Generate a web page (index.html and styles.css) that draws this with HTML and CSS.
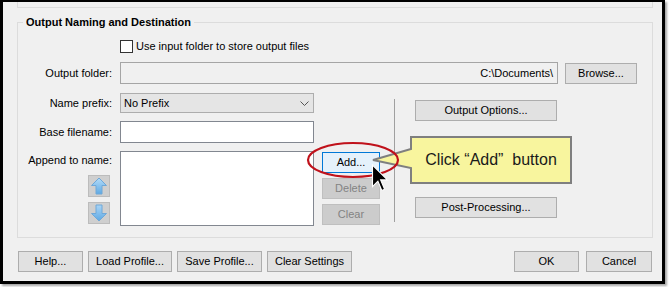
FILE: index.html
```html
<!DOCTYPE html>
<html>
<head>
<meta charset="utf-8">
<link rel="stylesheet" href="styles.css">
</head>
<body>
<div class="window">
  <div class="prev-group"></div>
  <fieldset class="group">
    <legend>Output Naming and Destination</legend>
    <div class="row-check"><span class="checkbox"></span><span>Use input folder to store output files</span></div>
    <div class="row-folder">
      <span class="label">Output folder:</span>
      <div class="field readonly">C:\Documents\</div>
      <button class="btn browse">Browse...</button>
    </div>
    <div class="row-lower">
      <div class="form-grid">
        <span class="label">Name prefix:</span>
        <div class="select"><span>No Prefix</span><svg class="chev" width="9" height="5" viewBox="0 0 9 5"><path d="M0.5 0.5 L4.5 4.5 L8.5 0.5" fill="none" stroke="#555" stroke-width="1"/></svg></div>
        <span class="label">Base filename:</span>
        <div class="field white base"></div>
        <div class="append-label">
          <span class="label">Append to name:</span>
          <div class="arrow-btns">
            <span class="arrow-btn"><svg width="20" height="20" viewBox="0 0 20 20"><defs><linearGradient id="gu" x1="0" y1="0" x2="0" y2="1"><stop offset="0" stop-color="#b3dcf9"/><stop offset="1" stop-color="#5fa9e3"/></linearGradient></defs><path d="M10 2 L17.5 9.5 L13 9.5 L13 18 L7 18 L7 9.5 L2.5 9.5 Z" fill="url(#gu)" stroke="#6fa8d8" stroke-width="1"/></svg></span>
            <span class="arrow-btn"><svg width="20" height="20" viewBox="0 0 20 20"><defs><linearGradient id="gd" x1="0" y1="0" x2="0" y2="1"><stop offset="0" stop-color="#a9d5f7"/><stop offset="1" stop-color="#5fa9e3"/></linearGradient></defs><path d="M7 2 L13 2 L13 10.5 L17.5 10.5 L10 18 L2.5 10.5 L7 10.5 Z" fill="url(#gd)" stroke="#6fa8d8" stroke-width="1"/></svg></span>
          </div>
        </div>
        <div class="field white list"></div>
      </div>
      <div class="list-btns">
        <button class="btn add">Add...</button>
        <button class="btn disabled">Delete</button>
        <button class="btn disabled">Clear</button>
      </div>
      <div class="separator"></div>
      <div class="side-btns">
        <button class="btn side">Output Options...</button>
        <button class="btn side">Post-Processing...</button>
      </div>
    </div>
  </fieldset>
  <div class="footer">
    <button class="btn help">Help...</button>
    <button class="btn load">Load Profile...</button>
    <button class="btn save">Save Profile...</button>
    <button class="btn clear-set">Clear Settings</button>
    <button class="btn ok">OK</button>
    <button class="btn cancel">Cancel</button>
  </div>
</div>
<div class="annotation">
  <svg class="annot-svg" width="670" height="287" viewBox="0 0 670 287">
    <path d="M411 137 H571 V183 H411 V168 L373 160 L411 149 Z" fill="#f8f59e" stroke="#7f7f7f" stroke-width="2" stroke-linejoin="miter"/>
    <ellipse cx="353" cy="160" rx="45" ry="17" fill="none" stroke="#c0121b" stroke-width="2.2"/>
    <path d="M372.5 165 L372.5 186.6 L377.9 181.2 L381.9 190.6 L384.6 189.3 L380.6 179.9 L387.4 179.9 Z" fill="#000" stroke="#fff" stroke-width="1.1" stroke-linejoin="miter"/>
  </svg>
  <div class="callout-text">Click “Add”&nbsp; button</div>
</div>
</body>
</html>
```
FILE: styles.css
```css
* { box-sizing: border-box; }

body {
  margin: 0;
  width: 670px;
  height: 287px;
  overflow: hidden;
  background: #ffffff;
  position: relative;
  font-family: "Liberation Sans", Arial, sans-serif;
  font-size: 11px;
  color: #000;
}

.window {
  width: 665px;
  height: 284px;
  border: 3px solid #000;
  border-top-width: 2px;
  background: #f0f0f0;
  box-shadow: 2px 2px 2px rgba(0, 0, 0, 0.35);
  display: flex;
  flex-direction: column;
}

.prev-group {
  margin: 0 9px 0 14px;
  height: 6px;
  border: 1px solid #dcdcdc;
  border-top: 0;
  flex: none;
}

.group {
  margin: 8px 9px 0 14px;
  padding: 0 0 11px 0;
  border: 1px solid #dcdcdc;
  min-width: 0;
  flex: none;
}

.group legend {
  margin-left: 5px;
  padding: 0 3px;
  font-weight: bold;
  font-size: 11px;
  line-height: 13px;
}

.row-check {
  margin-top: 11px;
  padding-left: 102px;
  display: flex;
  align-items: center;
  gap: 3px;
  height: 13px;
  line-height: 13px;
}

.checkbox {
  width: 13px;
  height: 13px;
  border: 1px solid #333;
  background: #fff;
  flex: none;
}

.label {
  text-align: right;
  white-space: nowrap;
}

.row-folder {
  margin-top: 9px;
  display: flex;
  align-items: center;
  height: 22px;
}

.row-folder .label {
  width: 94px;
  margin-right: 8px;
}

.field {
  height: 22px;
  border: 1px solid #828790;
  background: #fff;
}

.field.readonly {
  width: 438px;
  background: #f0f0f0;
  border-color: #a5a5a5;
  text-align: right;
  padding-right: 4px;
  line-height: 20px;
}

.btn {
  font-family: "Liberation Sans", Arial, sans-serif;
  font-size: 11px;
  color: #000;
  background: #e1e1e1;
  border: 1px solid #adadad;
  padding: 0;
  margin: 0;
  height: 21px;
  line-height: 19px;
  text-align: center;
  white-space: nowrap;
  flex: none;
}

.btn.browse {
  width: 72px;
  margin-left: 7px;
}

.row-lower {
  display: flex;
  align-items: flex-start;
}

.form-grid {
  margin-top: 9px;
  display: grid;
  grid-template-columns: 94px 194px;
  column-gap: 8px;
  row-gap: 8px;
  align-items: center;
}

.select {
  height: 20px;
  border: 1px solid #adadad;
  background: #e5e5e5;
  display: flex;
  align-items: center;
  justify-content: space-between;
  padding: 0 4px 0 3px;
}

.chev { display: block; }

.field.base { height: 22px; }

.field.list { height: 75px; align-self: start; }

.append-label {
  align-self: start;
  display: flex;
  flex-direction: column;
  align-items: flex-end;
  padding-top: 2px;
}

.append-label .label {
  line-height: 14px;
}

.arrow-btns {
  margin-top: 8px;
  margin-right: 2px;
  display: flex;
  flex-direction: column;
  gap: 5px;
}

.arrow-btn {
  width: 22px;
  height: 22px;
  background: #cfcfcf;
  border: 1px solid #bcbcbc;
  display: block;
}

.arrow-btn svg { display: block; }

.list-btns {
  margin-top: 68px;
  margin-left: 8px;
  display: flex;
  flex-direction: column;
  gap: 5px;
}

.list-btns .btn {
  width: 58px;
}

.btn.add {
  background: #e5f1fb;
  border-color: #0078d7;
}

.btn.disabled {
  background: #cccccc;
  border-color: #bfbfbf;
  color: #838383;
}

.separator {
  margin-top: 15px;
  margin-left: 14px;
  width: 1px;
  height: 123px;
  background: #a0a0a0;
  flex: none;
}

.side-btns {
  margin-top: 16px;
  margin-left: 20px;
  display: flex;
  flex-direction: column;
  gap: 76px;
}

.btn.side { width: 142px; }

.footer {
  margin-top: 13px;
  padding: 0 10px 0 15px;
  display: flex;
  gap: 5px;
}

.btn.help { width: 65px; }
.btn.load { width: 84px; }
.btn.save { width: 85px; }
.btn.clear-set { width: 85px; }
.btn.ok { width: 65px; margin-left: auto; margin-right: 2px; }
.btn.cancel { width: 66px; }

.annotation {
  position: absolute;
  left: 0;
  top: 0;
  width: 670px;
  height: 287px;
  pointer-events: none;
}

.annot-svg {
  position: absolute;
  left: 0;
  top: 0;
}

.callout-text {
  position: absolute;
  left: 412px;
  top: 138px;
  width: 158px;
  height: 44px;
  display: flex;
  align-items: center;
  justify-content: center;
  font-family: "Liberation Sans", Arial, sans-serif;
  font-size: 16px;
  color: #1a1a1a;
}
```
